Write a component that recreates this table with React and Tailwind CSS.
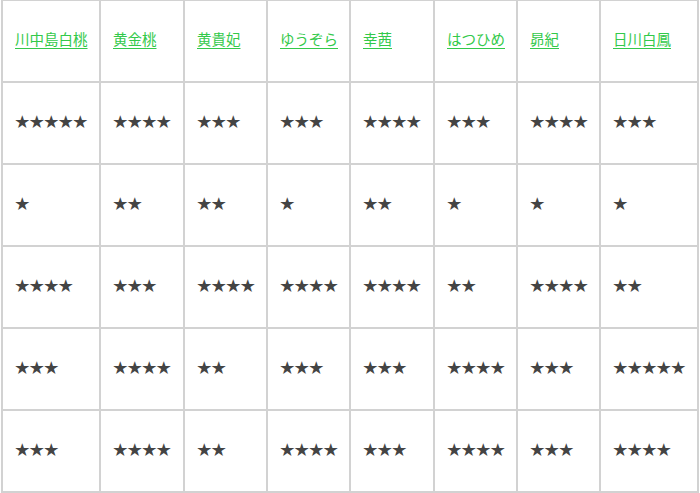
const VARIETIES = ['川中島白桃', '黄金桃', '黄貴妃', 'ゆうぞら', '幸茜', 'はつひめ', '昴紀', '日川白鳳'];

const RATINGS = [
  [5, 4, 3, 3, 4, 3, 4, 3],
  [1, 2, 2, 1, 2, 1, 1, 1],
  [4, 3, 4, 4, 4, 2, 4, 2],
  [3, 4, 2, 3, 3, 4, 3, 5],
  [3, 4, 2, 4, 3, 4, 3, 4],
];

function Cell({ children, last, bottom }) {
  return (
    <div
      className={`flex items-center pl-3 pb-[4px] whitespace-nowrap border-l-2 border-t-2 border-[#d2d2d2] h-[82px] ${last ? 'border-r-2' : ''} ${bottom ? 'border-b-2 h-[84px]' : ''}`}
    >
      {children}
    </div>
  );
}

export default function App() {
  return (
    <div
      className="bg-white w-[700px] h-[493px] overflow-hidden text-[14.5px]"
      style={{ fontFamily: '"Noto Sans CJK JP", "Noto Sans", sans-serif' }}
    >
      <div className="ml-[1px] mt-[-1px] grid grid-cols-[98px_84px_83px_83px_84px_83px_83px_100px]">
        {VARIETIES.map((name, i) => (
          <Cell key={name} last={i === VARIETIES.length - 1}>
            <a href="#" className="text-[#33c94a] underline underline-offset-[3px] leading-none">
              {name}
            </a>
          </Cell>
        ))}
        {RATINGS.map((row, r) =>
          row.map((n, i) => (
            <Cell key={`${r}-${i}`} last={i === row.length - 1} bottom={r === RATINGS.length - 1}>
              <span className="text-[#444444] leading-none">{'★'.repeat(n)}</span>
            </Cell>
          ))
        )}
      </div>
    </div>
  );
}
